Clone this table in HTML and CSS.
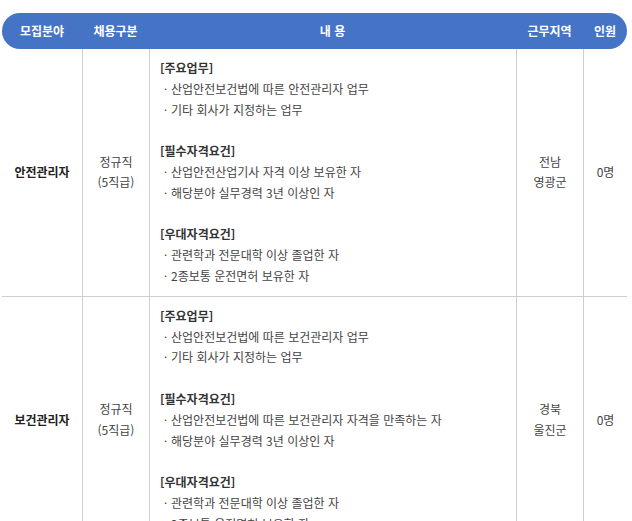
FILE: index.html
```html
<!DOCTYPE html>
<html lang="ko">
<head>
<meta charset="utf-8">
<link rel="stylesheet" href="styles.css">
</head>
<body>
<div class="board">
  <div class="head">
    <div class="hc">모집분야</div>
    <div class="hc">채용구분</div>
    <div class="hc">내 용</div>
    <div class="hc">근무지역</div>
    <div class="hc">인원</div>
  </div>
  <div class="row">
    <div class="cell field">안전관리자</div>
    <div class="cell sep">정규직<br>(5직급)</div>
    <div class="cell sep desc">
      <p class="sec">[주요업무]</p>
      <p class="item">ㆍ산업안전보건법에 따른 안전관리자 업무</p>
      <p class="item">ㆍ기타 회사가 지정하는 업무</p>
      <p class="sec gap">[필수자격요건]</p>
      <p class="item">ㆍ산업안전산업기사 자격 이상 보유한 자</p>
      <p class="item">ㆍ해당분야 실무경력 3년 이상인 자</p>
      <p class="sec gap">[우대자격요건]</p>
      <p class="item">ㆍ관련학과 전문대학 이상 졸업한 자</p>
      <p class="item">ㆍ2종보통 운전면허 보유한 자</p>
    </div>
    <div class="cell sep">전남<br>영광군</div>
    <div class="cell sep">0명</div>
  </div>
  <div class="row">
    <div class="cell field">보건관리자</div>
    <div class="cell sep">정규직<br>(5직급)</div>
    <div class="cell sep desc">
      <p class="sec">[주요업무]</p>
      <p class="item">ㆍ산업안전보건법에 따른 보건관리자 업무</p>
      <p class="item">ㆍ기타 회사가 지정하는 업무</p>
      <p class="sec gap">[필수자격요건]</p>
      <p class="item">ㆍ산업안전보건법에 따른 보건관리자 자격을 만족하는 자</p>
      <p class="item">ㆍ해당분야 실무경력 3년 이상인 자</p>
      <p class="sec gap">[우대자격요건]</p>
      <p class="item">ㆍ관련학과 전문대학 이상 졸업한 자</p>
      <p class="item">ㆍ2종보통 운전면허 보유한 자</p>
    </div>
    <div class="cell sep">경북<br>울진군</div>
    <div class="cell sep">0명</div>
  </div>
</div>
</body>
</html>
```

FILE: styles.css
```css
html, body {
  margin: 0;
  padding: 0;
  background: #fff;
}
body {
  font-family: "Noto Sans CJK KR", "Noto Sans", sans-serif;
  font-size: 12px;
  color: #444;
  height: 521px;
  overflow: hidden;
}
.board {
  width: 625px;
  margin: 13px 0 0 2px;
}
.head, .row {
  display: grid;
  grid-template-columns: 80px 67px 367px 67px 44px;
}
.head {
  height: 36px;
  background: #4574c6;
  border-radius: 18px;
  align-items: center;
}
.hc {
  color: #fff;
  font-weight: 700;
  text-align: center;
  line-height: 36px;
}
.row {
  border-bottom: 1px solid #cfcfcf;
}
.cell {
  display: flex;
  align-items: center;
  justify-content: center;
  text-align: center;
  line-height: 20.8px;
}
.sep {
  border-left: 1px solid #cfcfcf;
}
.field {
  font-weight: 700;
  color: #222;
}
.desc {
  display: block;
  text-align: left;
  padding: 9px 10px 9px 10px;
}
.desc p {
  margin: 0;
}
.sec {
  font-weight: 700;
  color: #333;
}
.sec.gap {
  margin-top: 20.8px !important;
}
.item {
  color: #444;
}
```
